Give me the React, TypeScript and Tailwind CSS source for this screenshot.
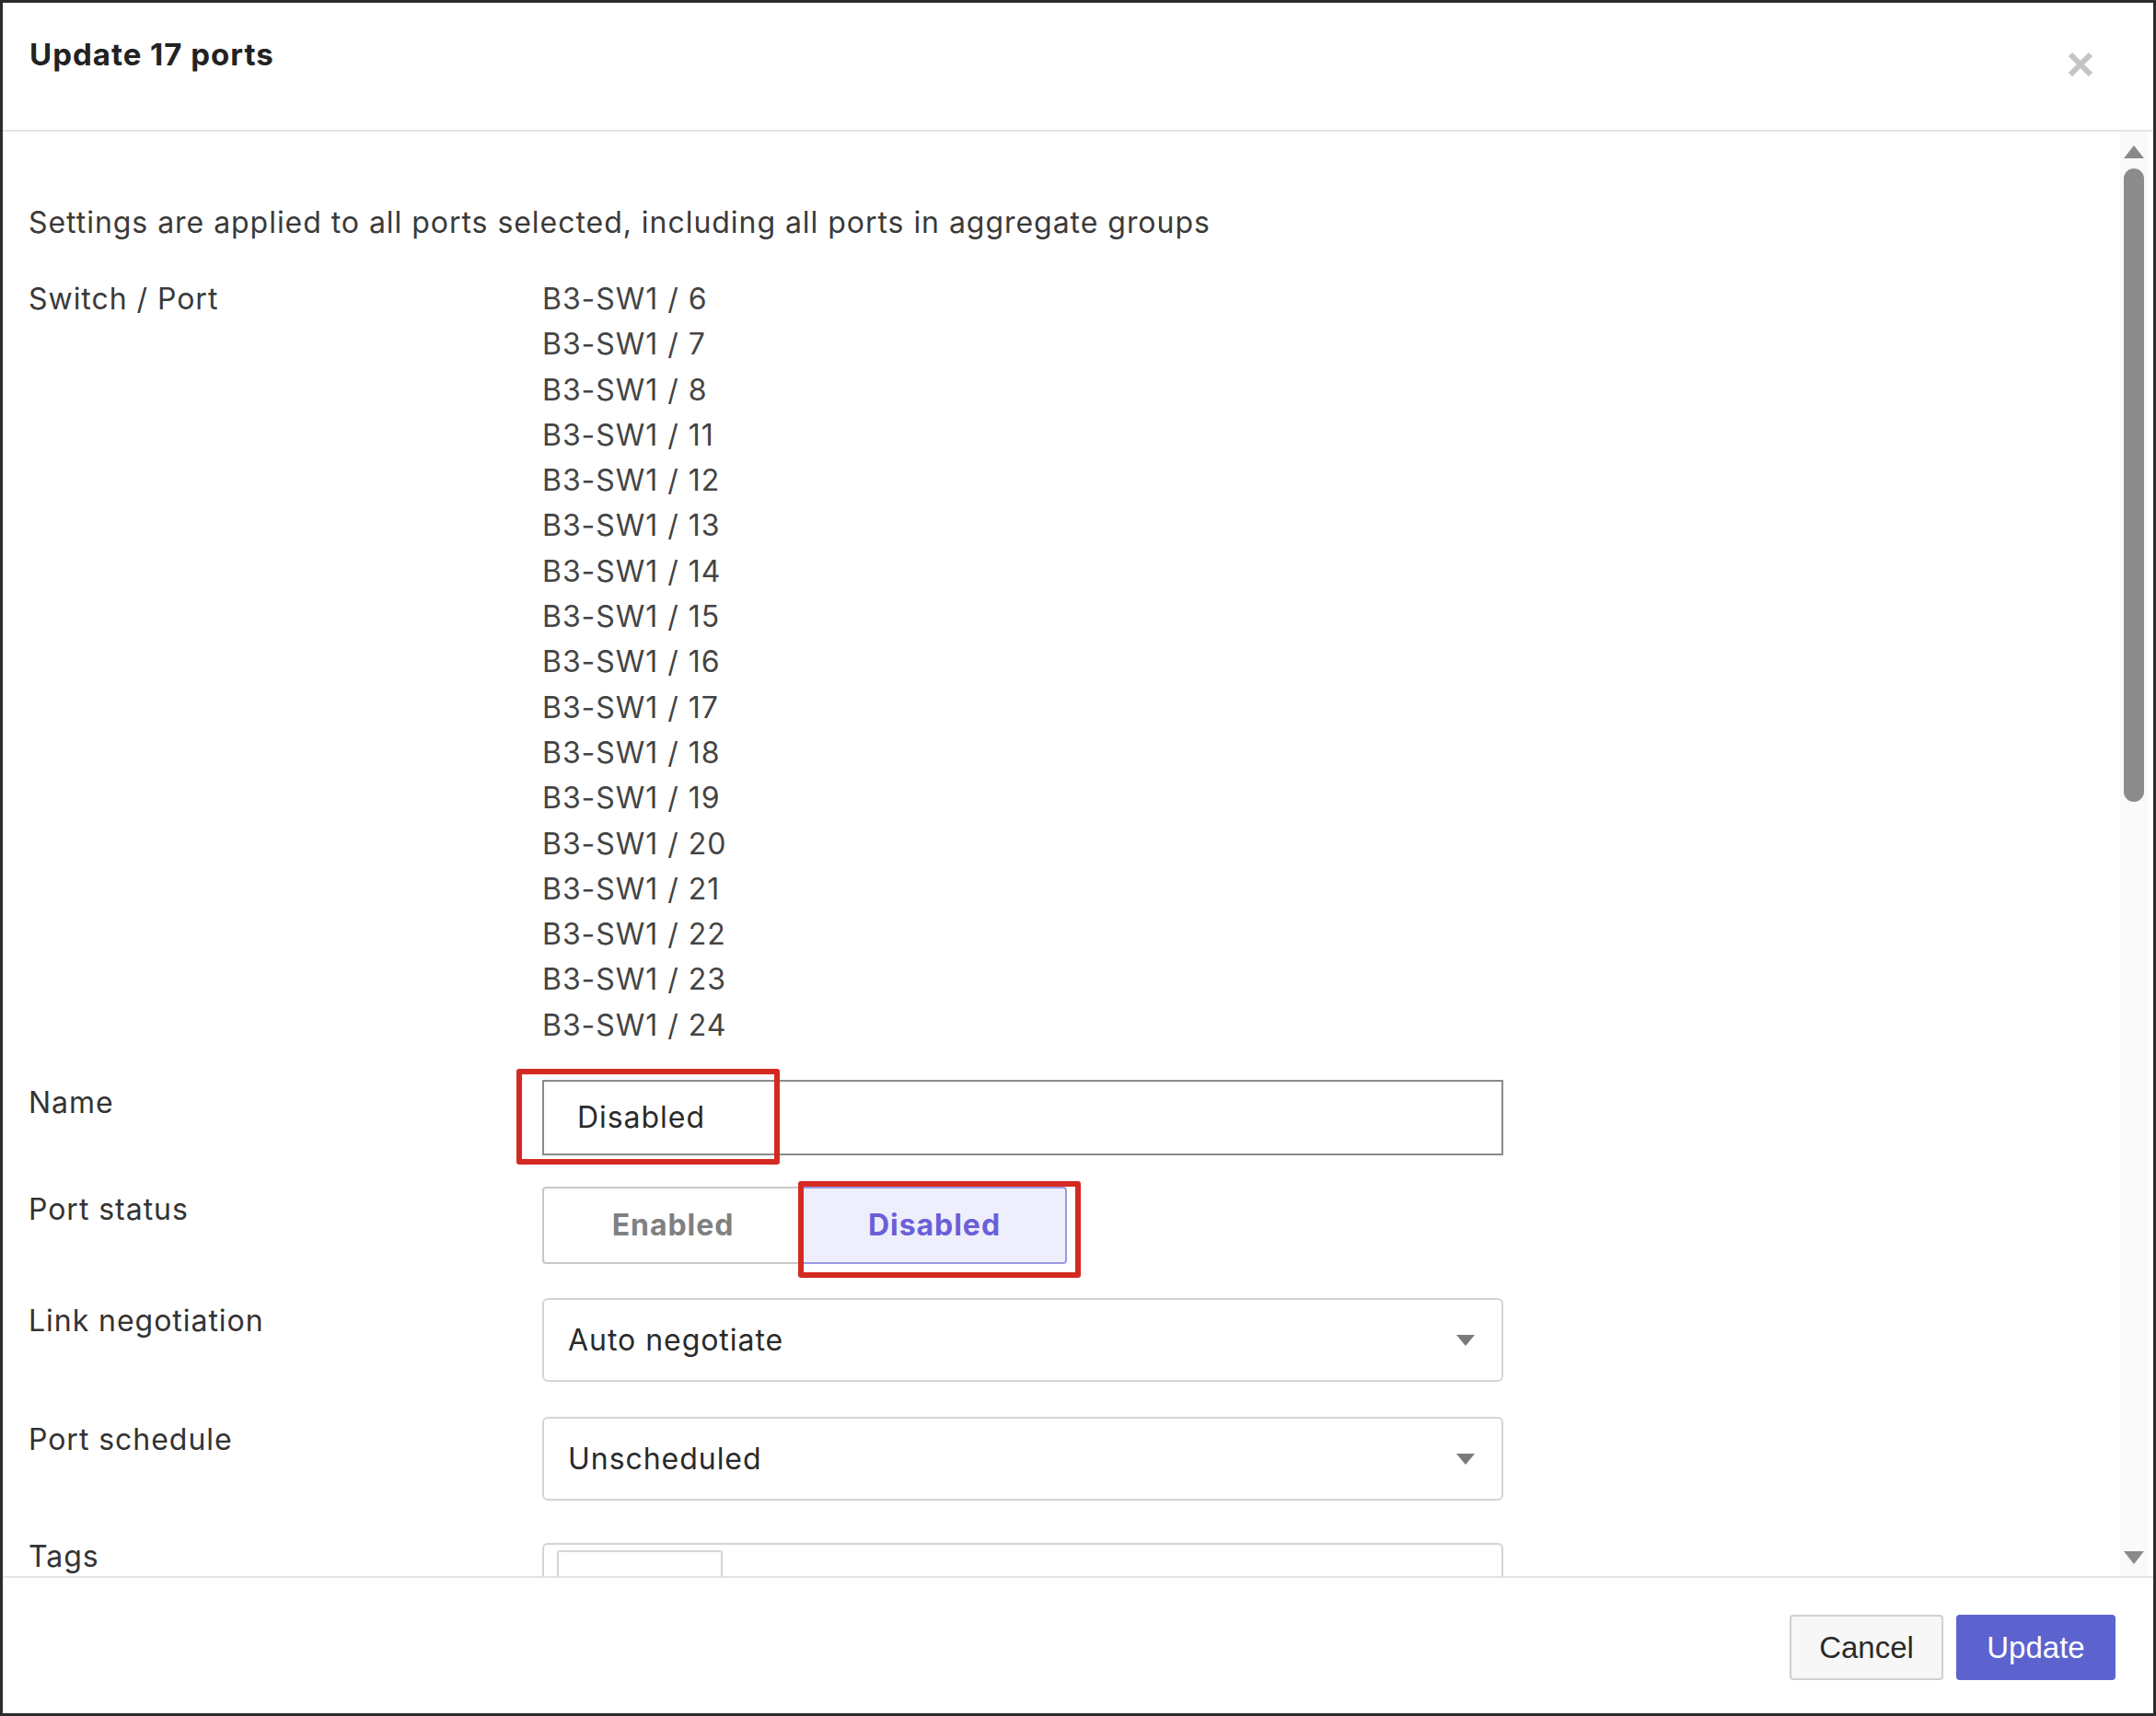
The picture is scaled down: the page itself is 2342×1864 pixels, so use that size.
import React from "react";

const ports = [6, 7, 8, 11, 12, 13, 14, 15, 16, 17, 18, 19, 20, 21, 22, 23, 24];

function Caret() {
  return (
    <svg width="22" height="14" viewBox="0 0 22 14" className="shrink-0">
      <path d="M1 1 H21 L11 13 Z" fill="#7a7a7a" />
    </svg>
  );
}

export default function App() {
  const font = { fontFamily: "Inter, 'Noto Sans', sans-serif" };
  return (
    <div className="w-[2342px] h-[1864px] bg-white border-[3px] border-[#2b2b2b] flex flex-col text-[#333] overflow-hidden" style={font}>
      {/* header */}
      <div className="h-[140px] shrink-0 flex items-start justify-between border-b-2 border-[#e4e4e4]">
        <div className="pl-[29px] pt-[34px] text-[33px] font-bold text-[#222] leading-[44px] tracking-[0.03em]">Update 17 ports</div>
        <div className="mr-[44px] mt-[32px] w-[70px] h-[70px] flex items-center justify-center">
          <svg width="28" height="28" viewBox="0 0 28 28">
            <path d="M3 3 L25 25 M25 3 L3 25" stroke="#c4c4c4" strokeWidth="6" />
          </svg>
        </div>
      </div>

      {/* body */}
      <div className="flex-1 flex min-h-0">
        <div className="flex-1 overflow-hidden pl-[28px] pt-[79px] text-[32px] tracking-[0.03em]">
          <div className="leading-[40px] text-[#3a3a3a]">Settings are applied to all ports selected, including all ports in aggregate groups</div>

          <div className="flex mt-[38px]">
            <div className="w-[558px] leading-[49.3px] text-[#3a3a3a]">Switch / Port</div>
            <div className="flex flex-col leading-[49.3px] text-[#444]">
              {ports.map((p) => (
                <div key={p}>B3-SW1 / {p}</div>
              ))}
            </div>
          </div>

          <div className="flex mt-[35px]">
            <div className="w-[558px] leading-[49px]">Name</div>
            <div className="relative w-[1044px] h-[82px] border-2 border-[#8a8a8a] flex items-center pl-[36px] text-[#2a2a2a]">
              Disabled
              <div className="absolute left-[-30px] top-[-14px] w-[286px] h-[104px] border-[6px] border-[#d42a22] rounded-[3px]" />
            </div>
          </div>

          <div className="flex mt-[34px]">
            <div className="w-[558px] leading-[49px]">Port status</div>
            <div className="relative flex h-[84px]">
              <div className="w-[282px] border-2 border-r-0 border-[#c8c8c8] rounded-l-[4px] flex items-center justify-center font-bold text-[#808080]">Enabled</div>
              <div className="w-[288px] border-2 border-[#9a9ae6] bg-[#eeeefc] rounded-r-[4px] flex items-center justify-center font-bold text-[#6a5fd8]">Disabled</div>
              <div className="absolute left-[278px] top-[-6px] w-[307px] h-[105px] border-[6px] border-[#d42a22] rounded-[3px]" />
            </div>
          </div>

          <div className="flex mt-[37px]">
            <div className="w-[558px] leading-[49px]">Link negotiation</div>
            <div className="w-[1044px] h-[91px] border-2 border-[#d4d4d4] rounded-[6px] flex items-center justify-between pl-[26px] pr-[28px] text-[#2a2a2a]">
              Auto negotiate
              <Caret />
            </div>
          </div>

          <div className="flex mt-[38px]">
            <div className="w-[558px] leading-[49px]">Port schedule</div>
            <div className="w-[1044px] h-[91px] border-2 border-[#d4d4d4] rounded-[6px] flex items-center justify-between pl-[26px] pr-[28px] text-[#2a2a2a]">
              Unscheduled
              <Caret />
            </div>
          </div>

          <div className="flex mt-[36px]">
            <div className="w-[558px] leading-[49px]">Tags</div>
            <div className="w-[1044px] h-[80px] border-2 border-[#d4d4d4] rounded-[6px] mt-[10px] pl-[14px] pt-[6px]">
              <div className="w-[180px] h-[60px] border-2 border-[#d4d4d4] rounded-[3px]" />
            </div>
          </div>
        </div>

        {/* scrollbar */}
        <div className="w-[30px] mr-[6px] bg-[#fafafa] flex flex-col items-center pt-[14px] pb-[12px]">
          <svg width="24" height="16" viewBox="0 0 24 16"><path d="M12 1 L23 15 H1 Z" fill="#8a8a8a" /></svg>
          <div className="w-[22px] h-[688px] mt-[10px] rounded-full bg-[#8c8c8c]" />
          <div className="flex-1" />
          <svg width="24" height="16" viewBox="0 0 24 16"><path d="M1 1 H23 L12 15 Z" fill="#8a8a8a" /></svg>
        </div>
      </div>

      {/* footer */}
      <div className="h-[149px] shrink-0 border-t-2 border-[#e4e4e4] flex items-start justify-end gap-[14px] pr-[41px] pt-[40px]">
        <button className="w-[167px] h-[71px] border-2 border-[#d0d0d0] rounded-[4px] bg-[#f7f7f7] text-[33px] text-[#2a2a2a]" style={{ fontFamily: "'Liberation Sans', Arial, sans-serif" }}>Cancel</button>
        <button className="w-[173px] h-[71px] rounded-[4px] bg-[#5c63cf] text-[33px] text-white" style={{ fontFamily: "'Liberation Sans', Arial, sans-serif" }}>Update</button>
      </div>
    </div>
  );
}
